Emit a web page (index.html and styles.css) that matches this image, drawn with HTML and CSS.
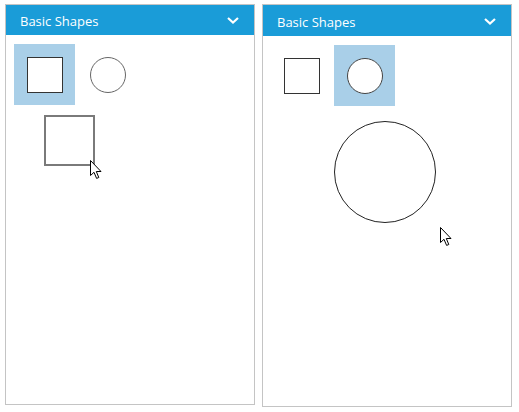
FILE: index.html
```html
<!DOCTYPE html>
<html>
<head>
<meta charset="utf-8">
<link rel="stylesheet" href="styles.css">
</head>
<body>
<div class="stage">
  <section class="panel panel-left">
    <header class="header">
      <span class="title">Basic Shapes</span>
      <svg class="chevron" width="12" height="7" viewBox="0 0 12 7"><path d="M1 1 L6 5.5 L11 1" fill="none" stroke="#fff" stroke-width="2.2"/></svg>
    </header>
    <div class="palette">
      <div class="item selected"><div class="shape-square"></div></div>
      <div class="item"><div class="shape-circle"></div></div>
    </div>
    <div class="drag-square"></div>
    <svg class="cursor cursor-left" width="13" height="20" viewBox="0 0 13 20"><path d="M0.5 0.5 L0.5 15.5 L4 12.3 L6.6 18.4 L8.8 17.5 L6.3 11.5 L11 11.5 Z" fill="#fff" stroke="#000" stroke-width="1" stroke-linejoin="miter"/></svg>
  </section>
  <section class="panel panel-right">
    <header class="header">
      <span class="title">Basic Shapes</span>
      <svg class="chevron" width="12" height="7" viewBox="0 0 12 7"><path d="M1 1 L6 5.5 L11 1" fill="none" stroke="#fff" stroke-width="2.2"/></svg>
    </header>
    <div class="palette">
      <div class="item"><div class="shape-square"></div></div>
      <div class="item selected"><div class="shape-circle dark"></div></div>
    </div>
    <div class="drag-circle"></div>
    <svg class="cursor cursor-right" width="13" height="20" viewBox="0 0 13 20"><path d="M0.5 0.5 L0.5 15.5 L4 12.3 L6.6 18.4 L8.8 17.5 L6.3 11.5 L11 11.5 Z" fill="#fff" stroke="#000" stroke-width="1" stroke-linejoin="miter"/></svg>
  </section>
</div>
</body>
</html>
```

FILE: styles.css
```css
* { box-sizing: border-box; }
html, body { margin: 0; padding: 0; background: #fff; }
.stage {
  display: flex;
  align-items: flex-start;
  gap: 7px;
  padding: 4px 0 0 5px;
  font-family: "Open Sans", "Noto Sans", sans-serif;
}
.panel {
  position: relative;
  width: 250px;
  border: 1px solid #c4c4c4;
  background: #fff;
}
.panel-left { height: 401px; }
.panel-right { height: 403px; }
.header {
  display: flex;
  align-items: center;
  justify-content: space-between;
  background: #1a9cd8;
  color: #fff;
  padding: 0 15px 0 14px;
  font-size: 13px;
}
.panel-left .header { height: 30px; }
.panel-right .header { height: 31px; }
.title { line-height: 1; padding-top: 3px; }
.chevron { display: block; margin-top: 1px; }
.palette {
  display: flex;
  gap: 2px;
  padding: 9px 0 0 8px;
}
.item {
  width: 61px;
  height: 61px;
  display: flex;
  align-items: center;
  justify-content: center;
}
.item.selected { background: #a9cfe8; }
.shape-square {
  width: 36px;
  height: 36px;
  border: 1px solid #333;
  background: #fff;
}
.shape-circle {
  width: 36px;
  height: 36px;
  border: 1px solid #666;
  border-radius: 50%;
  background: #fff;
}
.shape-circle.dark { border-color: #444; }
.drag-square {
  position: absolute;
  left: 38px;
  top: 110px;
  width: 51px;
  height: 51px;
  border: 2px solid #7a7a7a;
}
.drag-circle {
  position: absolute;
  left: 71px;
  top: 116px;
  width: 102px;
  height: 102px;
  border: 1px solid #222;
  border-radius: 50%;
}
.cursor { position: absolute; display: block; }
.cursor-left { left: 84px; top: 155px; }
.cursor-right { left: 177px; top: 222px; }
```
